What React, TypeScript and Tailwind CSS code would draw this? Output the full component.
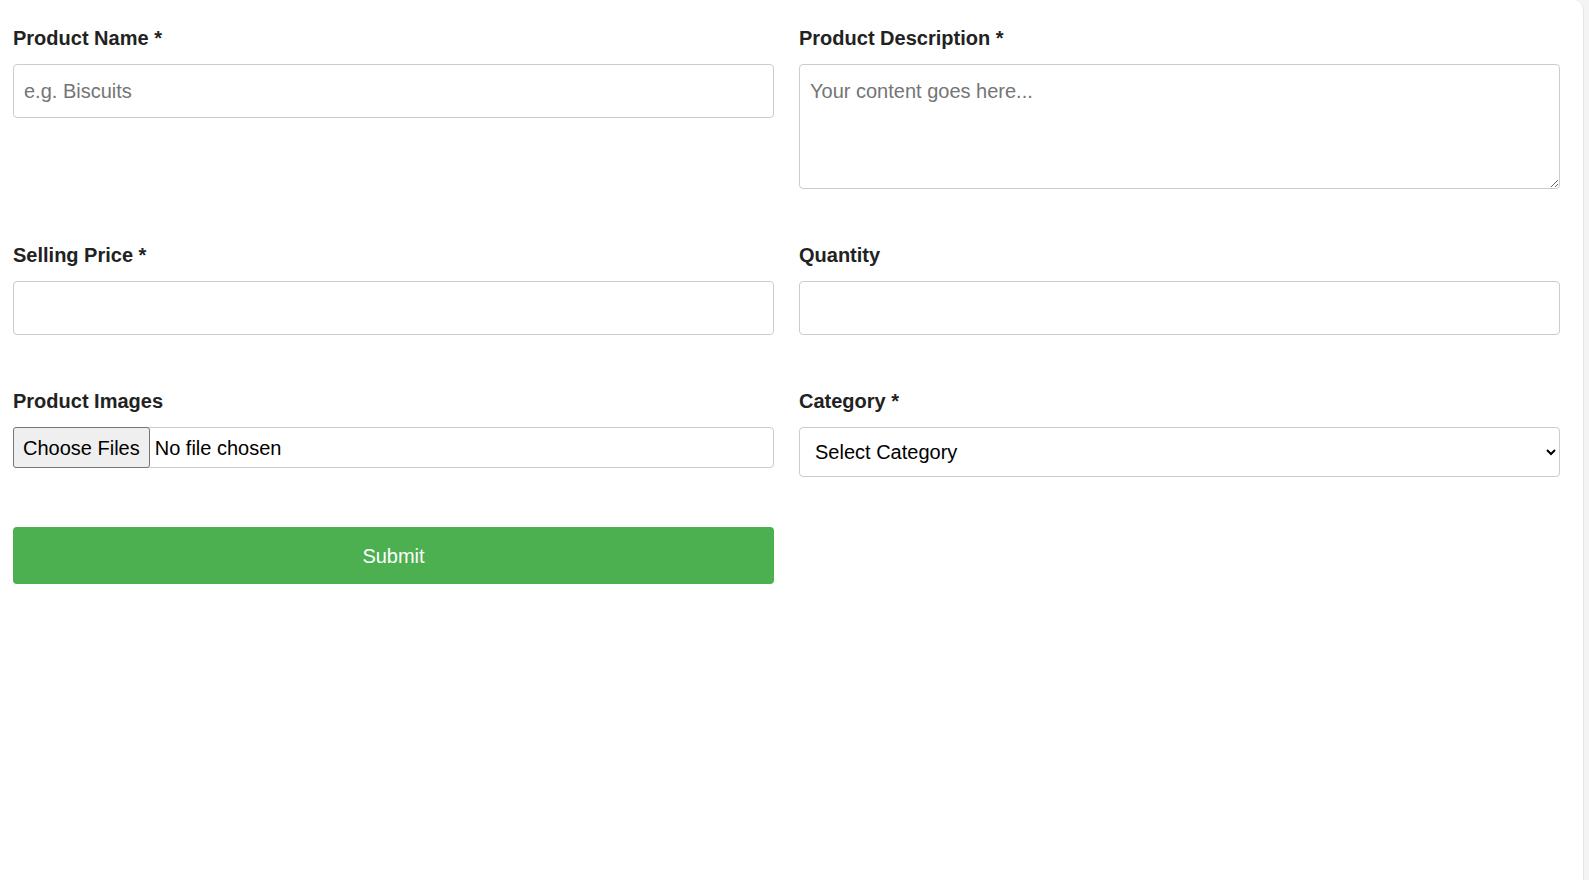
import { useState } from 'react';

// Simple add-product form: two columns of fields, green submit below
const labelCls = 'block text-[20px] leading-[23px] font-bold text-[#222] mb-[14px]';
const fieldCls =
  'w-full border border-[#ccc] rounded-[4px] bg-white text-[20px] text-[#222] placeholder:text-[#757575] outline-none';

export default function App() {
  const [category, setCategory] = useState('');

  return (
    <div className="h-[880px] flex bg-[#f4f4f4] overflow-hidden font-['Liberation_Sans',Arial,sans-serif]">
      <div className="w-[1584px] h-[920px] shrink-0 bg-white border-r border-[#e6e6e6] rounded-tr-[10px] pl-[13px] pt-[27px]">
        <form
          onSubmit={(e) => e.preventDefault()}
          className="grid grid-cols-[761px_761px] gap-x-[25px] gap-y-[55px] items-start"
        >
          {/* Row 1 */}
          <div>
            <label className={labelCls}>Product Name *</label>
            <input type="text" placeholder="e.g. Biscuits" className={`${fieldCls} h-[54px] px-[10px]`} />
          </div>
          <div>
            <label className={labelCls}>Product Description *</label>
            <textarea
              placeholder="Your content goes here..."
              className={`${fieldCls} h-[125px] px-[10px] pt-[15px] pb-[10px] leading-[23px] block`}
            />
          </div>

          {/* Row 2 */}
          <div>
            <label className={labelCls}>Selling Price *</label>
            <input type="number" className={`${fieldCls} h-[54px] px-[10px]`} />
          </div>
          <div>
            <label className={labelCls}>Quantity</label>
            <input type="number" className={`${fieldCls} h-[54px] px-[10px]`} />
          </div>

          {/* Row 3 */}
          <div>
            <label className={labelCls}>Product Images</label>
            <div className="flex items-stretch h-[41px] border border-[#ccc] rounded-[4px]">
              <button
                type="button"
                className="-m-px px-[9px] bg-[#efefef] border border-[#767676] rounded-[3px] text-[20px] text-black"
              >
                Choose Files
              </button>
              <span className="flex items-center pl-[6px] text-[20px] text-black">No file chosen</span>
            </div>
          </div>
          <div>
            <label className={labelCls}>Category *</label>
            <select
              value={category}
              onChange={(e) => setCategory(e.target.value)}
              className={`${fieldCls} h-[50px] pl-[11px] pr-[6px] text-black`}
            >
              <option value="">Select Category</option>
              <option value="food">Food</option>
              <option value="drinks">Drinks</option>
            </select>
          </div>
        </form>

        <button
          type="submit"
          className="mt-[50px] w-[761px] h-[57px] rounded-[4px] bg-[#4caf50] text-white text-[20px]"
        >
          Submit
        </button>
      </div>
    </div>
  );
}
